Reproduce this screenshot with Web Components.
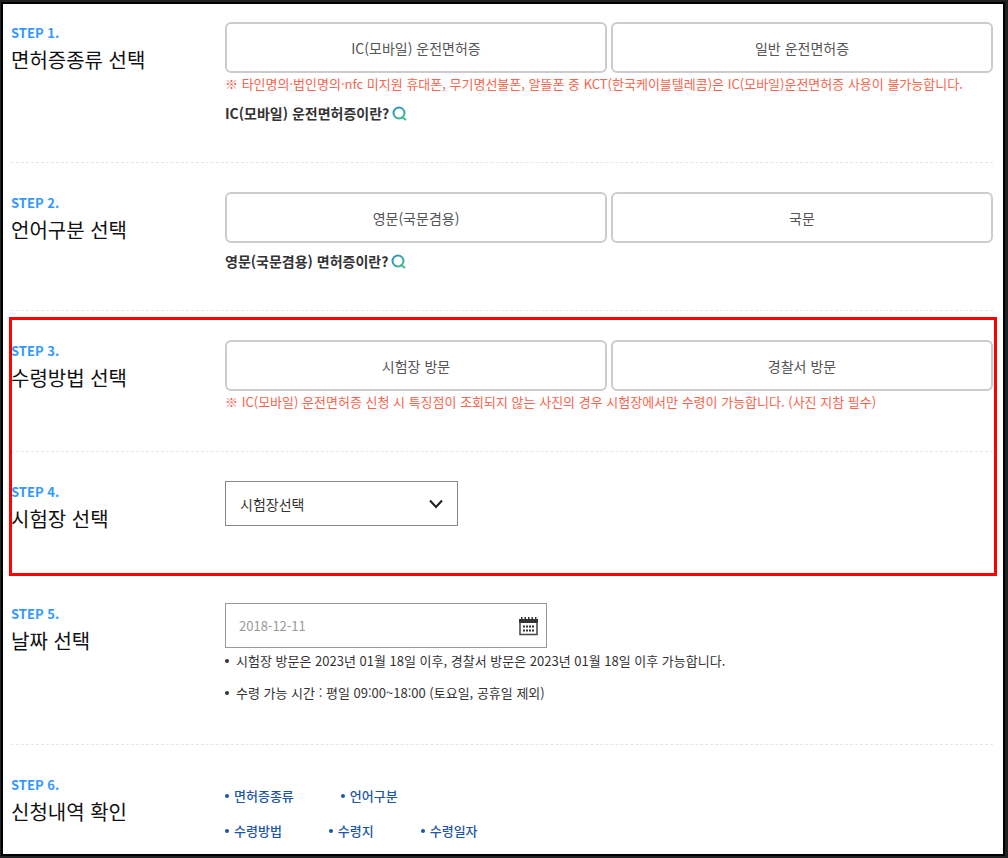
<!DOCTYPE html>
<html lang="ko">
<head>
<meta charset="utf-8">
<meta name="viewport" content="width=device-width, initial-scale=1">
<title>운전면허증 신청</title>
<style>
body {
    margin: 0;
    font-family: "Noto Sans CJK KR", "Noto Sans", sans-serif;
    font-size: 14px;
    color: #333;
}
</style>
</head>
<body>
<apply-form>
    <form-step step="STEP 1." heading="면허증종류 선택" class="first">
        <choice-row>
            <choice-button>IC(모바일) 운전면허증</choice-button>
            <choice-button>일반 운전면허증</choice-button>
        </choice-row>
        <notice-text>※ 타인명의·법인명의·nfc 미지원 휴대폰, 무기명선불폰, 알뜰폰 중 KCT(한국케이블텔레콤)은 IC(모바일)운전면허증 사용이 불가능합니다.</notice-text>
        <info-link>IC(모바일) 운전면허증이란?</info-link>
    </form-step>
    <form-step step="STEP 2." heading="언어구분 선택">
        <choice-row>
            <choice-button>영문(국문겸용)</choice-button>
            <choice-button>국문</choice-button>
        </choice-row>
        <info-link>영문(국문겸용) 면허증이란?</info-link>
    </form-step>
    <marked-area>
        <form-step step="STEP 3." heading="수령방법 선택">
            <choice-row>
                <choice-button>시험장 방문</choice-button>
                <choice-button>경찰서 방문</choice-button>
            </choice-row>
            <notice-text>※ IC(모바일) 운전면허증 신청 시 특징점이 조회되지 않는 사진의 경우 시험장에서만 수령이 가능합니다. (사진 지참 필수)</notice-text>
        </form-step>
        <form-step step="STEP 4." heading="시험장 선택">
            <place-select label="시험장 선택">시험장선택</place-select>
        </form-step>
    </marked-area>
    <form-step step="STEP 5." heading="날짜 선택">
        <date-field label="날짜 선택" hint="2018-12-11"></date-field>
        <dot-list>
            <dot-item>시험장 방문은 2023년 01월 18일 이후, 경찰서 방문은 2023년 01월 18일 이후 가능합니다.</dot-item>
            <dot-item>수령 가능 시간 : 평일 09:00~18:00 (토요일, 공휴일 제외)</dot-item>
        </dot-list>
    </form-step>
    <form-step step="STEP 6." heading="신청내역 확인" class="last">
        <summary-list>
            <summary-row>
                <dot-item class="strong">면허증종류</dot-item>
                <dot-item class="strong">언어구분</dot-item>
            </summary-row>
            <summary-row>
                <dot-item class="strong">수령방법</dot-item>
                <dot-item class="strong">수령지</dot-item>
                <dot-item class="strong">수령일자</dot-item>
            </summary-row>
        </summary-list>
    </form-step>
</apply-form>

<script>
// every element clones its own markup into an open shadow root
class BaseElement extends HTMLElement {
    constructor() {
        super();
        const template = document.createElement("template");
        template.innerHTML = this.constructor.html;
        this.attachShadow({ mode: "open" });
        this.shadowRoot.appendChild(template.content.cloneNode(true));
    }

    $(selector) {
        return this.shadowRoot.querySelector(selector);
    }
}

class ApplyForm extends BaseElement {
    static html = `
<style>
:host {
    display: block;
    box-sizing: border-box;
    min-height: 100vh;
    border: 2px solid #202124;
    border-width: 2px 3px 2px 1px;
    background: #202124;
}
form {
    box-sizing: border-box;
    min-height: calc(100vh - 4px);
    border: 2px solid #000;
    padding: 0 10px 10px 8px;
    background: #fff;
}
</style>
<form><slot></slot></form>
`;
}

class FormStep extends BaseElement {
    static html = `
<style>
:host {
    display: grid;
    grid-template-columns: 214px minmax(0, 1fr);
    padding: 29px 0 38px;
    border-bottom: 1px dashed #e6e6e6;
}
:host(.first) { padding-top: 18px; }
:host(.last) {
    padding-bottom: 0;
    border-bottom: none;
}
#step {
    font-size: 13px;
    line-height: 22px;
    font-weight: 700;
    color: #3399ff;
}
h2 {
    margin: 0;
    font-size: 20px;
    line-height: 32px;
    font-weight: 400;
    color: #111;
}
</style>
<header>
    <div id="step"></div>
    <h2></h2>
</header>
<div><slot></slot></div>
`;

    connectedCallback() {
        this.$("#step").textContent = this.getAttribute("step");
        this.$("h2").textContent = this.getAttribute("heading");
    }
}

class ChoiceRow extends BaseElement {
    static html = `
<style>
:host {
    display: flex;
    gap: 4px;
}
::slotted(*) { flex: 1; }
</style>
<slot></slot>
`;
}

class ChoiceButton extends BaseElement {
    static html = `
<style>
:host { display: block; }
button {
    display: block;
    box-sizing: border-box;
    width: 100%;
    height: 51px;
    padding: 0;
    border: 2px solid #ccc;
    border-radius: 6px;
    background: #fff;
    font: inherit;
    color: #555;
    cursor: pointer;
}
</style>
<button type="button"><slot></slot></button>
`;
}

class NoticeText extends BaseElement {
    static html = `
<style>
:host {
    display: block;
    font-size: 13px;
    line-height: 22px;
    color: #f8654e;
}
</style>
<slot></slot>
`;
}

class InfoLink extends BaseElement {
    static html = `
<style>
:host {
    display: block;
    margin-top: 7px;
}
a {
    display: flex;
    align-items: center;
    gap: 3px;
    width: fit-content;
    line-height: 22px;
    font-weight: 700;
    color: #333;
    text-decoration: none;
}
</style>
<a href="#"><span><slot></slot></span>
<svg width="15" height="16" viewBox="0 0 15 16" fill="none" stroke-width="2">
    <defs><linearGradient id="g" x1="0" y1="0" x2="1" y2="1">
        <stop offset="0" stop-color="#2a8fc4"/><stop offset="1" stop-color="#3dbb8c"/>
    </linearGradient></defs>
    <circle cx="7" cy="8" r="5.5" stroke="url(#g)"/>
    <path d="M9.5 11.5l4.5 3.5" stroke="#3dbb8c"/>
</svg></a>
`;
}

// red outline laid over the steps it wraps
class MarkedArea extends BaseElement {
    static html = `
<style>
:host {
    display: block;
    position: relative;
}
#outline {
    position: absolute;
    inset: 6px -4px -2px -2px;
    border: 3px solid #f00;
    pointer-events: none;
}
</style>
<slot></slot>
<div id="outline"></div>
`;
}

class PlaceSelect extends BaseElement {
    static html = `
<style>
:host {
    display: grid;
    width: 233px;
    max-width: 100%;
}
select, svg { grid-area: 1 / 1; }
select {
    appearance: none;
    box-sizing: border-box;
    width: 100%;
    height: 45px;
    padding: 0 40px 0 14px;
    border: 1px solid #888;
    border-radius: 0;
    background: #fff;
    font: inherit;
    color: #333;
}
svg {
    align-self: center;
    justify-self: end;
    margin-right: 15px;
    pointer-events: none;
}
</style>
<select><option></option></select>
<svg width="14" height="10" viewBox="0 0 14 10" fill="none" stroke="#222" stroke-width="2">
    <path d="M1 1.5l6 6.5 6-6.5"/>
</svg>
`;

    connectedCallback() {
        this.$("select").setAttribute("aria-label", this.getAttribute("label"));
        this.$("option").textContent = this.textContent;
    }
}

class DateField extends BaseElement {
    static html = `
<style>
:host {
    display: flex;
    align-items: center;
    box-sizing: border-box;
    width: 322px;
    max-width: 100%;
    height: 45px;
    padding: 0 8px 0 13px;
    border: 1px solid #999;
    background: #fff;
}
input {
    flex: 1;
    min-width: 0;
    padding: 0;
    border: none;
    outline: none;
    font: inherit;
    font-size: 13px;
    color: #333;
}
input::placeholder { color: #999; }
button {
    display: flex;
    padding: 2px 0 0;
    border: none;
    background: none;
}
</style>
<input type="text">
<button type="button" aria-label="달력">
<svg width="19" height="19" viewBox="0 0 19 19" fill="#333">
    <path d="M0 2h19v4H0z"/>
    <path d="M2 0h1.500v3H2zM5.500 0H7v3H5.500zM9 0h1.500v3H9zM12.500 0H14v3h-1.500zM16 0h1.500v3H16z"/>
    <path d="M1 5v12.500h17V5" fill="none" stroke="#444" stroke-width="1.500"/>
    <path d="M4 8.500h2v2H4zM7 8.500h2v2H7zM10 8.500h2v2h-2zM13 8.500h2v2h-2zM4 12.500h2v2H4zM7 12.500h2v2H7zM10 12.500h2v2h-2zM13 12.500h2v2h-2z"/>
</svg>
</button>
`;

    connectedCallback() {
        this.$("input").setAttribute("aria-label", this.getAttribute("label"));
        this.$("input").placeholder = this.getAttribute("hint");
    }
}

class DotList extends BaseElement {
    static html = `
<style>
:host {
    display: flex;
    flex-direction: column;
    gap: 6px;
}
</style>
<slot></slot>
`;
}

class DotItem extends BaseElement {
    static html = `
<style>
:host {
    display: flex;
    align-items: center;
    gap: 7px;
    font-size: 13px;
    line-height: 26px;
}
:host(.strong) {
    gap: 5px;
    font-weight: 500;
    color: #1c56a8;
}
i {
    flex: none;
    width: 4px;
    height: 4px;
    border-radius: 50%;
    background: currentColor;
}
</style>
<i></i><span><slot></slot></span>
`;
}

class SummaryList extends BaseElement {
    static html = `
<style>
:host {
    display: flex;
    flex-direction: column;
    gap: 9px;
    padding-top: 9px;
}
</style>
<slot></slot>
`;
}

class SummaryRow extends BaseElement {
    static html = `
<style>
:host {
    display: flex;
    flex-wrap: wrap;
    gap: 47px;
}
</style>
<slot></slot>
`;
}

customElements.define("apply-form", ApplyForm);
customElements.define("form-step", FormStep);
customElements.define("choice-row", ChoiceRow);
customElements.define("choice-button", ChoiceButton);
customElements.define("notice-text", NoticeText);
customElements.define("info-link", InfoLink);
customElements.define("marked-area", MarkedArea);
customElements.define("place-select", PlaceSelect);
customElements.define("date-field", DateField);
customElements.define("dot-list", DotList);
customElements.define("dot-item", DotItem);
customElements.define("summary-list", SummaryList);
customElements.define("summary-row", SummaryRow);
</script>
</body>
</html>
